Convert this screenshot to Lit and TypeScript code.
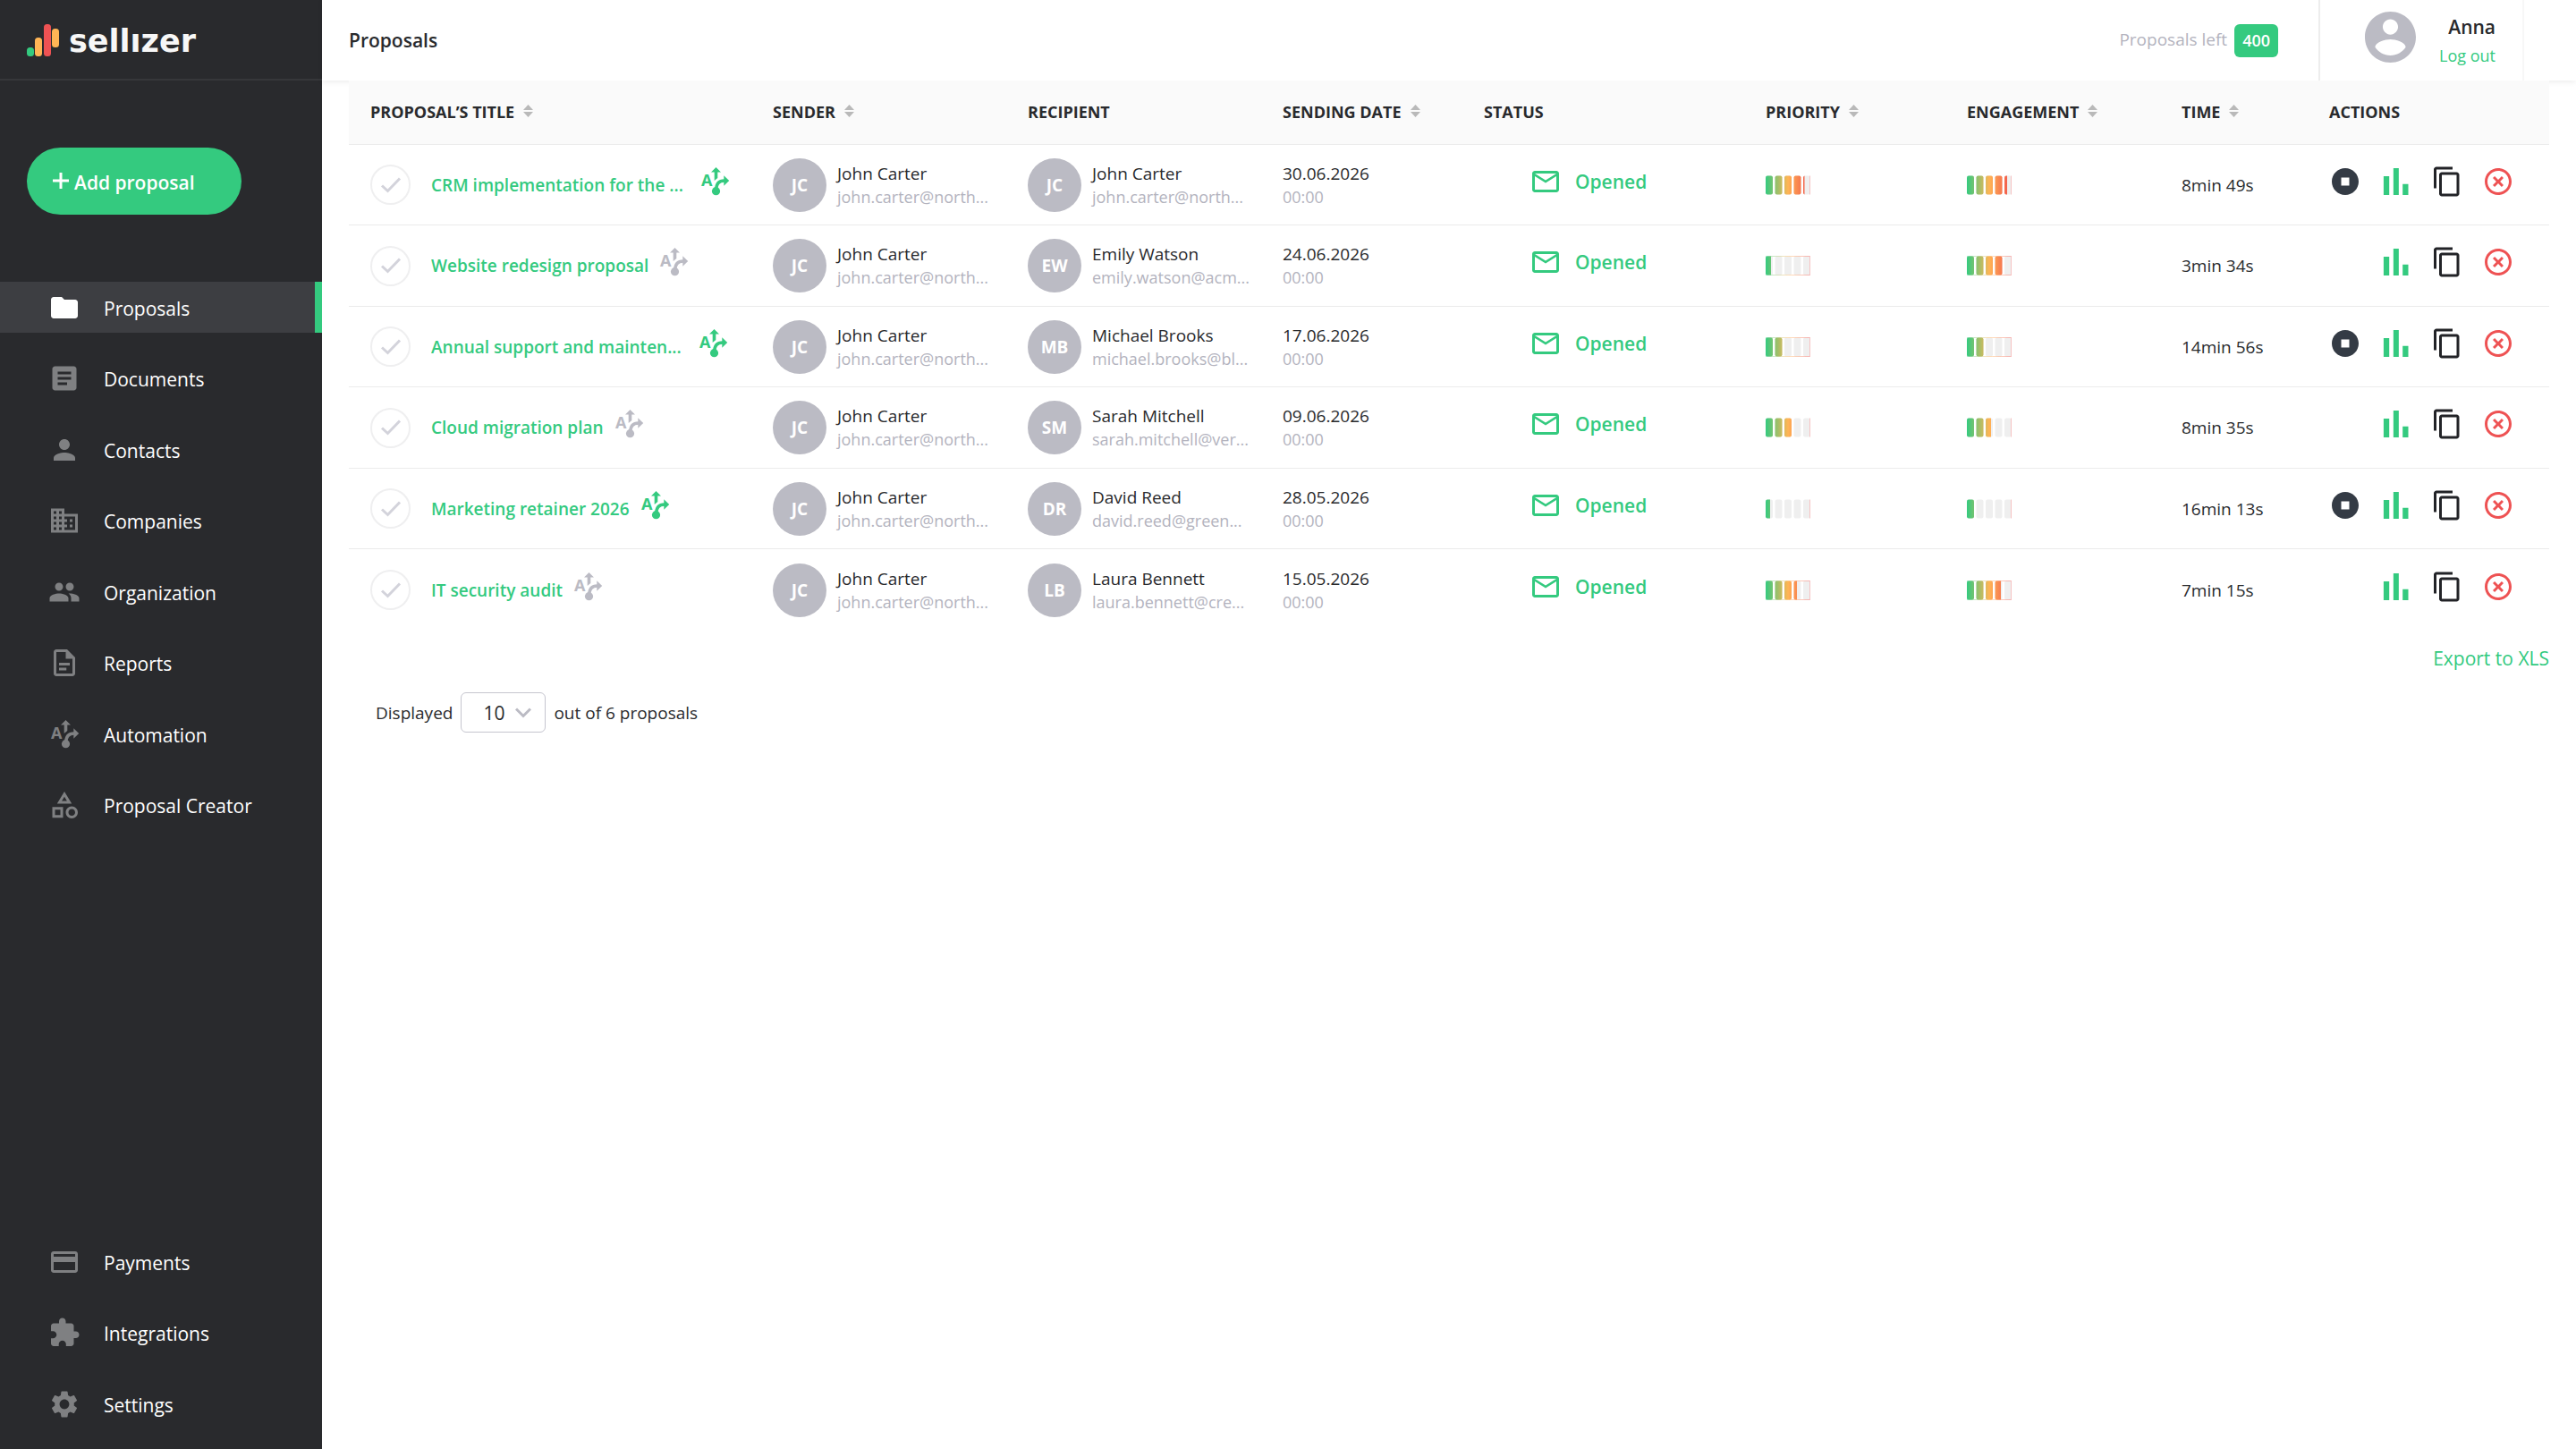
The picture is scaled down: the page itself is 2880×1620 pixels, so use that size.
import { LitElement, html, svg, css, nothing } from "lit";
import { customElement, property } from "lit/decorators.js";

const ICONS: Record<string, string> = {
  folder: "M10 4H4c-1.1 0-1.99.9-1.99 2L2 18c0 1.1.9 2 2 2h16c1.1 0 2-.9 2-2V8c0-1.1-.9-2-2-2h-8l-2-2z",
  article:
    "M19 3H5c-1.1 0-2 .9-2 2v14c0 1.1.9 2 2 2h14c1.1 0 2-.9 2-2V5c0-1.1-.9-2-2-2zm-5 14H7v-2h7v2zm3-4H7v-2h10v2zm0-4H7V7h10v2z",
  person:
    "M12 12c2.21 0 4-1.79 4-4s-1.79-4-4-4-4 1.79-4 4 1.79 4 4 4zm0 2c-2.67 0-8 1.34-8 4v2h16v-2c0-2.66-5.33-4-8-4z",
  business:
    "M12 7V3H2v18h20V7H12zM6 19H4v-2h2v2zm0-4H4v-2h2v2zm0-4H4V9h2v2zm0-4H4V5h2v2zm4 12H8v-2h2v2zm0-4H8v-2h2v2zm0-4H8V9h2v2zm0-4H8V5h2v2zm10 12h-8v-2h2v-2h-2v-2h2v-2h-2V9h8v10zm-2-8h-2v2h2v-2zm0 4h-2v2h2v-2z",
  group:
    "M16 11c1.66 0 2.99-1.34 2.99-3S17.66 5 16 5c-1.66 0-3 1.34-3 3s1.34 3 3 3zm-8 0c1.66 0 2.99-1.34 2.99-3S9.66 5 8 5C6.34 5 5 6.34 5 8s1.34 3 3 3zm0 2c-2.33 0-7 1.17-7 3.5V19h14v-2.5c0-2.33-4.67-3.5-7-3.5zm8 0c-.29 0-.62.02-.97.05 1.16.84 1.97 1.97 1.97 3.45V19h6v-2.5c0-2.33-4.67-3.5-7-3.5z",
  report:
    "M14 2H6c-1.1 0-1.99.9-1.99 2L4 20c0 1.1.89 2 1.99 2H18c1.1 0 2-.9 2-2V8l-6-6zM6 20V4h7v5h5v11H6zM8 12h8v2H8zM8 15.700h5.500v2H8z",
  category:
    "M12 2l-5.500 9h11L12 2zm0 3.840L13.930 9h-3.870L12 5.840zM17.500 13c-2.490 0-4.500 2.010-4.500 4.500s2.010 4.500 4.500 4.500 4.500-2.010 4.500-4.500-2.010-4.500-4.500-4.500zm0 7c-1.380 0-2.500-1.120-2.500-2.500s1.120-2.500 2.500-2.500 2.500 1.120 2.500 2.500-1.120 2.500-2.500 2.500zM3 21.500h8v-8H3v8zm2-6h4v4H5v-4z",
  card:
    "M20 4H4c-1.110 0-1.990.89-1.990 2L2 18c0 1.110.89 2 2 2h16c1.110 0 2-.89 2-2V6c0-1.110-.89-2-2-2zm0 14H4v-6h16v6zm0-10H4V6h16v2z",
  extension:
    "M20.500 11H19V7c0-1.100-.9-2-2-2h-4V3.500C13 2.120 11.880 1 10.500 1S8 2.120 8 3.500V5H4c-1.100 0-1.990.9-1.990 2v3.800H3.500c1.490 0 2.700 1.210 2.700 2.700s-1.210 2.700-2.700 2.700H2V20c0 1.100.9 2 2 2h3.800v-1.500c0-1.490 1.210-2.700 2.700-2.700 1.490 0 2.700 1.210 2.700 2.700V22H17c1.100 0 2-.9 2-2v-4h1.500c1.380 0 2.500-1.120 2.500-2.500S21.880 11 20.500 11z",
  settings:
    "M19.140 12.940c.04-.3.06-.61.06-.94 0-.32-.02-.64-.07-.94l2.030-1.580c.18-.14.23-.41.12-.61l-1.920-3.320c-.12-.22-.37-.29-.59-.22l-2.390.96c-.5-.38-1.030-.7-1.620-.94l-.36-2.540c-.04-.24-.24-.41-.48-.41h-3.840c-.24 0-.43.17-.47.41l-.36 2.540c-.59.24-1.130.57-1.620.94l-2.390-.96c-.22-.08-.47 0-.59.22L2.740 8.870c-.12.21-.08.47.12.61l2.030 1.580c-.05.3-.09.63-.09.94s.02.64.07.94l-2.030 1.580c-.18.14-.23.41-.12.61l1.920 3.320c.12.22.37.29.59.22l2.390-.96c.5.38 1.030.7 1.620.94l.36 2.540c.05.24.24.41.48.41h3.840c.24 0 .44-.17.47-.41l.36-2.540c.59-.24 1.130-.56 1.620-.94l2.390.96c.22.08.47 0 .59-.22l1.920-3.320c.12-.22.07-.47-.12-.61l-2.010-1.580zM12 15.600c-1.980 0-3.600-1.620-3.600-3.600s1.620-3.600 3.600-3.600 3.600 1.620 3.600 3.600-1.620 3.600-3.600 3.600z",
  mail:
    "M22 6c0-1.100-.9-2-2-2H4c-1.100 0-2 .9-2 2v12c0 1.100.9 2 2 2h16c1.100 0 2-.9 2-2V6zm-2 0l-8 5-8-5h16zm0 12H4V8l8 5 8-5v10z",
  stop: "M12 2C6.480 2 2 6.480 2 12s4.480 10 10 10 10-4.480 10-10S17.520 2 12 2zm3 13H9V9h6v6z",
  chart: "M2.600 8h4.200v14H2.600zM9.900 2h4v20h-4zM16.800 13.800H21V22h-4.200z",
  copy:
    "M16 1H4c-1.100 0-2 .9-2 2v14h2V3h12V1zm3 4H8c-1.100 0-2 .9-2 2v14c0 1.100.9 2 2 2h11c1.100 0 2-.9 2-2V7c0-1.100-.9-2-2-2zm0 16H8V7h11v14z",
  cancel:
    "M14.590 8L12 10.590 9.410 8 8 9.410 10.590 12 8 14.590 9.410 16 12 13.410 14.590 16 16 14.590 13.410 12 16 9.410 14.590 8zM12 2C6.470 2 2 6.470 2 12s4.470 10 10 10 10-4.470 10-10S17.530 2 12 2zm0 18c-4.410 0-8-3.590-8-8s3.590-8 8-8 8 3.590 8 8-3.590 8-8 8z",
};

@customElement("app-icon")
export class AppIcon extends LitElement {
  @property() name = "";

  static styles = css`
    :host {
      display: block;
      flex: none;
      width: 36px;
      height: 36px;
    }
    .glyph {
      display: block;
      width: 100%;
      height: 100%;
      fill: currentColor;
    }
    .letter {
      font: 700 18px "Open Sans", sans-serif;
    }
    .curve {
      fill: none;
      stroke: currentColor;
      stroke-width: 3.6;
    }
  `;

  render() {
    if (this.name === "automation") {
      return html`<svg class="glyph" viewBox="-3 -2 36 36" aria-hidden="true">
        <text class="letter" x="0" y="20.500">A</text>
        <path d="M16.500 0L22 5.600H18.300V12L14.700 15V5.600H11z" />
        <circle cx="16.500" cy="26.700" r="4.600" />
        <path class="curve" d="M16.500 26C17 18 19.500 15 26 15" />
        <path d="M25.300 9.200L31.200 15L25.300 20.800z" />
      </svg>`;
    }
    return html`<svg class="glyph" viewBox="0 0 24 24" aria-hidden="true">
      <path d=${ICONS[this.name] ?? ""} />
    </svg>`;
  }
}

@customElement("score-meter")
export class ScoreMeter extends LitElement {
  @property({ type: Number }) value = 0;
  @property({ type: Boolean }) outlined = false;

  static styles = css`
    :host {
      display: block;
      width: 50px;
      height: 22px;
    }
    .meter {
      display: block;
      width: 50px;
      height: 22px;
    }
    .track {
      fill: #efefef;
    }
    .edge {
      fill: #f6c3c3;
    }
    .outline {
      fill: none;
      stroke: url(#scale);
      opacity: 0.4;
    }
  `;

  render() {
    const starts = [0, 10.5, 21, 31.5, 42];
    return html`<svg class="meter" viewBox="0 0 50 22" role="img" aria-label="${this.value}%">
      <defs>
        <linearGradient id="scale" gradientUnits="userSpaceOnUse" x1="0" y1="0" x2="50" y2="0">
          <stop offset="0" stop-color="#34ca7f" />
          <stop offset="0.500" stop-color="#ffb555" />
          <stop offset="1" stop-color="#f04b4b" />
        </linearGradient>
        <clipPath id="filled"><rect width=${this.value / 2} height="22" /></clipPath>
      </defs>
      ${starts.map((x) => svg`<rect class="track" x=${x} y="0.500" width="8" height="21" rx="2" />`)}
      ${this.outlined ? svg`<rect class="outline" x="0.500" y="0.500" width="49" height="21" />` : nothing}
      <rect class="edge" x="49" y="0.500" width="1" height="21" />
      <g clip-path="url(#filled)">
        ${starts.map((x) => svg`<rect fill="url(#scale)" x=${x} y="0.500" width="8" height="21" rx="2" />`)}
      </g>
    </svg>`;
  }
}

interface Person {
  initials: string;
  name: string;
  email: string;
}

interface Proposal {
  title: string;
  automated: boolean;
  recipient: Person;
  date: string;
  priority: number;
  engagement: number;
  time: string;
  outlined: boolean;
}

const SENDER: Person = { initials: "JC", name: "John Carter", email: "john.carter@north..." };

const PROPOSALS: Proposal[] = [
  { title: "CRM implementation for the ...", automated: true, recipient: SENDER, date: "30.06.2026", priority: 87, engagement: 90, time: "8min 49s", outlined: false },
  { title: "Website redesign proposal", automated: false, recipient: { initials: "EW", name: "Emily Watson", email: "emily.watson@acm..." }, date: "24.06.2026", priority: 12, engagement: 80, time: "3min 34s", outlined: true },
  { title: "Annual support and mainten...", automated: true, recipient: { initials: "MB", name: "Michael Brooks", email: "michael.brooks@bl..." }, date: "17.06.2026", priority: 40, engagement: 40, time: "14min 56s", outlined: true },
  { title: "Cloud migration plan", automated: false, recipient: { initials: "SM", name: "Sarah Mitchell", email: "sarah.mitchell@ver..." }, date: "09.06.2026", priority: 60, engagement: 54, time: "8min 35s", outlined: false },
  { title: "Marketing retainer 2026", automated: true, recipient: { initials: "DR", name: "David Reed", email: "david.reed@green..." }, date: "28.05.2026", priority: 10, engagement: 20, time: "16min 13s", outlined: false },
  { title: "IT security audit", automated: false, recipient: { initials: "LB", name: "Laura Bennett", email: "laura.bennett@cre..." }, date: "15.05.2026", priority: 70, engagement: 76, time: "7min 15s", outlined: true },
];

const COLUMNS = [
  { label: "Proposal’s title", sortable: true, cls: "c-title" },
  { label: "Sender", sortable: true, cls: "c-person" },
  { label: "Recipient", sortable: false, cls: "c-person" },
  { label: "Sending date", sortable: true, cls: "c-date" },
  { label: "Status", sortable: false, cls: "c-status" },
  { label: "Priority", sortable: true, cls: "c-priority" },
  { label: "Engagement", sortable: true, cls: "c-engagement" },
  { label: "Time", sortable: true, cls: "c-time" },
  { label: "Actions", sortable: false, cls: "c-actions" },
];

const MAIN_NAV = [
  ["folder", "Proposals"],
  ["article", "Documents"],
  ["person", "Contacts"],
  ["business", "Companies"],
  ["group", "Organization"],
  ["report", "Reports"],
  ["automation", "Automation"],
  ["category", "Proposal Creator"],
];

const FOOT_NAV = [
  ["card", "Payments"],
  ["extension", "Integrations"],
  ["settings", "Settings"],
];

@customElement("side-bar")
export class SideBar extends LitElement {
  static styles = css`
    :host {
      display: flex;
      flex-direction: column;
      box-sizing: border-box;
      padding-bottom: 22px;
      background: #292a2d;
      color: #fff;
    }
    .brand {
      box-sizing: border-box;
      height: 90px;
      padding: 26px 30px 0;
      border-bottom: 2px solid #36373a;
    }
    .logo {
      display: block;
      width: 200px;
      height: 40px;
    }
    .wordmark {
      font: 700 35px "DejaVu Sans", sans-serif;
      fill: #f7f7f7;
    }
    .add {
      display: flex;
      align-items: center;
      gap: 6px;
      width: 240px;
      height: 75px;
      margin: 75px 30px;
      padding: 0 29px;
      border: 0;
      border-radius: 38px;
      background: #34ca7f;
      color: #fff;
      font: 600 21px/30px "Open Sans", sans-serif;
    }
    .plus {
      width: 18px;
      height: 18px;
      margin-bottom: 2px;
      stroke: #fff;
      stroke-width: 3;
    }
    .label {
      padding-top: 2px;
    }
    .nav {
      display: flex;
      flex-direction: column;
      margin: 0;
      padding: 0;
      list-style: none;
    }
    .foot {
      margin-top: auto;
    }
    .item {
      margin-bottom: 22px;
    }
    .item:nth-child(even) {
      margin-bottom: 23px;
    }
    .item:last-child {
      margin-bottom: 0;
    }
    .link {
      display: flex;
      align-items: center;
      gap: 26px;
      box-sizing: border-box;
      height: 57px;
      padding-left: 54px;
      border-right: 8px solid transparent;
      color: #fff;
      font: 400 21px/30px "Open Sans", sans-serif;
      text-decoration: none;
    }
    .link app-icon {
      color: #7f8082;
    }
    .active {
      background: #3d3e42;
      border-right-color: #34ca7f;
    }
    .active app-icon {
      color: #fff;
    }
  `;

  private links(items: string[][], active?: string) {
    return items.map(
      ([icon, label]) => html`<li class="item">
        <a class="link ${label === active ? "active" : ""}" href="#">
          <app-icon name=${icon}></app-icon><span class="label">${label}</span>
        </a>
      </li>`
    );
  }

  render() {
    return html`
      <div class="brand">
        <svg class="logo" viewBox="0 0 200 40">
          <rect x="0" y="27" width="8" height="10" rx="3.500" fill="#34ca7f" />
          <rect x="9" y="16" width="8" height="21" rx="3.500" fill="#ffb555" />
          <rect x="19" y="1" width="8" height="36" rx="3.500" fill="#ee5253" />
          <rect x="28" y="6" width="8" height="21" rx="3.500" fill="#ffb555" />
          <text class="wordmark" x="47" y="32">sellızer</text>
        </svg>
      </div>
      <button class="add" type="button">
        <svg class="plus" viewBox="0 0 18 18" aria-hidden="true"><path d="M9 0v18M0 9h18" /></svg>
        <span class="label">Add proposal</span>
      </button>
      <nav><ul class="nav">${this.links(MAIN_NAV, "Proposals")}</ul></nav>
      <nav class="foot"><ul class="nav">${this.links(FOOT_NAV)}</ul></nav>
    `;
  }
}

@customElement("top-bar")
export class TopBar extends LitElement {
  static styles = css`
    :host {
      display: flex;
      align-items: center;
      box-sizing: border-box;
      height: 90px;
      padding-left: 30px;
      background: #fff;
      box-shadow: 0 2px 6px rgba(0, 0, 0, 0.07);
      color: #292a2d;
      font-family: "Open Sans", sans-serif;
    }
    .title {
      flex: 1;
      margin: 0;
      font: 600 21px/30px "Open Sans", sans-serif;
    }
    .quota {
      display: flex;
      align-items: center;
      gap: 8px;
      padding-right: 45px;
      color: #b3b3be;
      font-size: 19px;
      line-height: 24px;
    }
    .left {
      padding-bottom: 2px;
    }
    .count {
      margin-top: 1px;
      padding: 0 9px;
      border-radius: 6px;
      background: #34ca7f;
      color: #fff;
      font-size: 18px;
      font-weight: 600;
      line-height: 37px;
    }
    .user {
      display: flex;
      align-items: flex-start;
      gap: 26px;
      box-sizing: border-box;
      height: 90px;
      margin-right: 58px;
      padding: 13px 30px 0 50px;
      border-left: 2px solid #ededed;
      border-right: 2px solid #f7f7f7;
    }
    .face {
      width: 57px;
      height: 57px;
      fill: #bbbbc4;
    }
    .who {
      display: flex;
      flex-direction: column;
      align-items: flex-end;
      gap: 2px;
      padding-top: 1px;
    }
    .name {
      font-size: 21px;
      font-weight: 600;
      line-height: 32px;
    }
    .logout {
      color: #34ca7f;
      font-size: 18px;
      line-height: 28px;
      text-decoration: none;
    }
  `;

  render() {
    return html`
      <h1 class="title">Proposals</h1>
      <div class="quota"><span class="left">Proposals left</span><span class="count">400</span></div>
      <div class="user">
        <svg class="face" viewBox="2 2 20 20" aria-hidden="true">
          <path
            d="M12 2C6.480 2 2 6.480 2 12s4.480 10 10 10 10-4.480 10-10S17.520 2 12 2zm0 3c1.660 0 3 1.340 3 3s-1.340 3-3 3-3-1.340-3-3 1.340-3 3-3zm0 14.200c-2.500 0-4.710-1.280-6-3.220.03-1.990 4-3.080 6-3.080 1.990 0 5.970 1.090 6 3.080-1.290 1.940-3.500 3.220-6 3.220z"
          />
        </svg>
        <div class="who">
          <span class="name">Anna</span>
          <a class="logout" href="#">Log out</a>
        </div>
      </div>
    `;
  }
}

@customElement("proposal-table")
export class ProposalTable extends LitElement {
  static styles = css`
    :host {
      display: block;
      color: #292a2d;
      font-family: "Open Sans", sans-serif;
      font-size: 19px;
      line-height: 26px;
    }
    .table {
      width: 100%;
      table-layout: fixed;
      border-collapse: separate;
      border-spacing: 0;
    }
    .c-title { width: 450px; }
    .c-person { width: 285px; }
    .c-date { width: 225px; }
    .c-status { width: 315px; }
    .c-priority { width: 225px; }
    .c-engagement { width: 240px; }
    .c-time { width: 165px; }
    .c-actions { width: 270px; }
    .head {
      height: 72px;
      box-sizing: border-box;
      padding: 0 0 2px 24px;
      border-bottom: 1px solid #ebebeb;
      background: #fafafa;
      font-size: 18px;
      font-weight: 700;
      text-align: left;
      text-transform: uppercase;
      white-space: nowrap;
    }
    .sort {
      display: inline-flex;
      align-items: center;
      gap: 10px;
      padding: 0;
      border: 0;
      background: none;
      color: inherit;
      font: inherit;
      text-transform: inherit;
    }
    .arrows {
      width: 11px;
      height: 14px;
      margin-bottom: 2px;
      fill: #b9b9b9;
    }
    .cell {
      height: 90px;
      box-sizing: border-box;
      padding: 0 0 0 24px;
      border-bottom: 1px solid #ebebeb;
      vertical-align: middle;
      white-space: nowrap;
    }
    .row:nth-child(even) .cell {
      height: 91px;
    }
    .row:last-child .cell {
      border-bottom: 0;
    }
    .lead,
    .person,
    .status,
    .actions {
      display: flex;
      align-items: center;
    }
    .pick {
      display: grid;
      flex: none;
      place-items: center;
      margin-right: 23px;
    }
    .box,
    .tick {
      grid-area: 1 / 1;
    }
    .box {
      appearance: none;
      box-sizing: border-box;
      width: 45px;
      height: 45px;
      margin: 0;
      border: 2px solid #efeff0;
      border-radius: 50%;
      background: #fff;
    }
    .tick {
      width: 24px;
      height: 20px;
      fill: none;
      stroke: #d3d3db;
      stroke-width: 3;
      pointer-events: none;
    }
    .title {
      overflow: hidden;
      max-width: 292px;
      color: #34ca7f;
      font-weight: 600;
      text-decoration: none;
      text-overflow: ellipsis;
    }
    .auto {
      margin: 0 0 8px 10px;
      color: #bbbbc4;
    }
    .wide .auto {
      margin-left: 17px;
    }
    .on {
      color: #34ca7f;
    }
    .avatar {
      flex: none;
      width: 60px;
      height: 60px;
      margin-right: 12px;
      border-radius: 50%;
      background: #bbbbc4;
      color: #fff;
      font-weight: 700;
      line-height: 60px;
      text-align: center;
    }
    .sub {
      color: #b3b3be;
      font-size: 18px;
    }
    .status {
      gap: 15px;
      padding: 0 0 8px 51px;
      color: #34ca7f;
      font-size: 21px;
      font-weight: 600;
    }
    .actions {
      justify-content: flex-end;
      gap: 21px;
      width: 207px;
      padding-bottom: 8px;
    }
    .act {
      padding: 0;
      border: 0;
      background: none;
    }
    .stop { color: #343b45; }
    .chart { color: #34ca7f; }
    .copy { color: #222327; }
    .cancel { color: #ee5253; }
    .export {
      display: flex;
      justify-content: flex-end;
      margin-top: 16px;
    }
    .xls {
      color: #34ca7f;
      font-size: 21px;
      line-height: 30px;
      text-decoration: none;
    }
    .paging {
      display: flex;
      align-items: center;
      gap: 9px;
      margin: 23px 0 0 30px;
    }
    .size {
      display: grid;
      align-items: center;
    }
    .choice,
    .chevron {
      grid-area: 1 / 1;
    }
    .choice {
      appearance: none;
      box-sizing: border-box;
      width: 95px;
      height: 45px;
      padding: 0 0 0 24px;
      border: 1px solid #c6c6cf;
      border-radius: 6px;
      background: #fff;
      color: inherit;
      font: 400 21px/30px "Open Sans", sans-serif;
    }
    .chevron {
      justify-self: end;
      width: 18px;
      height: 12px;
      margin-right: 16px;
      fill: none;
      stroke: #bbbbc4;
      stroke-width: 3;
      pointer-events: none;
    }
  `;

  private person(p: Person) {
    return html`<div class="person">
      <span class="avatar">${p.initials}</span>
      <div>
        <div>${p.name}</div>
        <div class="sub">${p.email}</div>
      </div>
    </div>`;
  }

  private action(icon: string, label: string) {
    return html`<button class="act ${icon}" type="button" aria-label=${label}>
      <app-icon name=${icon}></app-icon>
    </button>`;
  }

  private row(p: Proposal) {
    return html`<tr class="row">
      <td class="cell">
        <div class="lead ${p.title.endsWith("...") ? "wide" : ""}">
          <label class="pick">
            <input class="box" type="checkbox" aria-label=${p.title} />
            <svg class="tick" viewBox="0 0 24 20" aria-hidden="true"><path d="M2 10.500L8.500 16.500L22 2.500" /></svg>
          </label>
          <a class="title" href="#">${p.title}</a>
          <app-icon class="auto ${p.automated ? "on" : ""}" name="automation"></app-icon>
        </div>
      </td>
      <td class="cell">${this.person(SENDER)}</td>
      <td class="cell">${this.person(p.recipient)}</td>
      <td class="cell">
        <div>${p.date}</div>
        <div class="sub">00:00</div>
      </td>
      <td class="cell">
        <div class="status"><app-icon name="mail"></app-icon><span>Opened</span></div>
      </td>
      <td class="cell"><score-meter .value=${p.priority} ?outlined=${p.outlined}></score-meter></td>
      <td class="cell"><score-meter .value=${p.engagement} ?outlined=${p.outlined}></score-meter></td>
      <td class="cell">${p.time}</td>
      <td class="cell">
        <div class="actions">
          ${p.automated ? this.action("stop", "Stop automation") : nothing}
          ${this.action("chart", "Statistics")} ${this.action("copy", "Copy")}
          ${this.action("cancel", "Cancel")}
        </div>
      </td>
    </tr>`;
  }

  render() {
    return html`
      <table class="table">
        <thead>
          <tr>
            ${COLUMNS.map(
              (c) => html`<th class="head ${c.cls}" scope="col">
                ${c.sortable
                  ? html`<button class="sort" type="button">
                      ${c.label}
                      <svg class="arrows" viewBox="0 0 11 14" aria-hidden="true">
                        <path d="M5.500 0L11 6H0zM5.500 14L0 8H11z" />
                      </svg>
                    </button>`
                  : c.label}
              </th>`
            )}
          </tr>
        </thead>
        <tbody>
          ${PROPOSALS.map((p) => this.row(p))}
        </tbody>
      </table>
      <div class="export"><a class="xls" href="#">Export to XLS</a></div>
      <div class="paging">
        <label for="size">Displayed</label>
        <div class="size">
          <select class="choice" id="size">
            <option>10</option>
            <option>25</option>
            <option>50</option>
          </select>
          <svg class="chevron" viewBox="0 0 18 12" aria-hidden="true"><path d="M1 1.500L9 9.500L17 1.500" /></svg>
        </div>
        <span>out of 6 proposals</span>
      </div>
    `;
  }
}

@customElement("app-root")
export class AppRoot extends LitElement {
  static styles = css`
    :host {
      display: grid;
      grid-template-columns: 360px minmax(0, 1fr);
      min-height: 100vh;
      background: #fff;
    }
    .content {
      padding: 0 30px;
    }
  `;

  render() {
    return html`
      <side-bar></side-bar>
      <main>
        <top-bar></top-bar>
        <div class="content"><proposal-table></proposal-table></div>
      </main>
    `;
  }
}
